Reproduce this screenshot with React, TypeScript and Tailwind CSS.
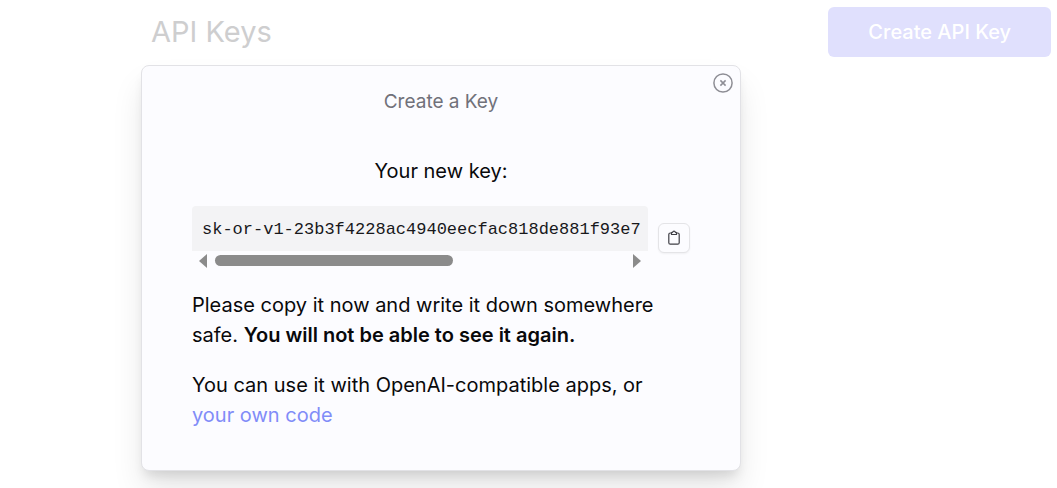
import { useRef } from "react";

const apiKey = "sk-or-v1-23b3f4228ac4940eecfac818de881f93e7";

function CloseIcon() {
  return (
    <svg className="size-5" viewBox="0 0 20 20" fill="none" stroke="#8e8e95" strokeWidth="1.5" aria-hidden="true">
      <circle cx="10" cy="10" r="9.1" />
      <path d="M7.4 7.4l5.2 5.2M12.6 7.4l-5.2 5.2" />
    </svg>
  );
}

function ClipboardIcon() {
  return (
    <svg className="h-4 w-3" viewBox="0 0 12 16" fill="none" stroke="#3f3f46" strokeWidth="1.2" strokeLinejoin="round" aria-hidden="true">
      <path d="M3.5 3H2.3C1.4 3 .8 3.6.8 4.5v8.2c0 .9.6 1.5 1.5 1.5h7.4c.9 0 1.5-.6 1.5-1.5V4.5c0-.9-.6-1.5-1.5-1.5H8.5" />
      <path d="M3.5 4.5V2.9c0-.4.3-.6.7-.6h.4C4.8 1.6 5.3 1.2 6 1.2s1.2.4 1.4 1.1h.4c.4 0 .7.2.7.6v1.6z" />
    </svg>
  );
}

function KeyField() {
  const code = useRef<HTMLPreElement>(null);
  const scroll = (left: number) => code.current?.scrollBy({ left });
  return (
    <div className="min-w-0 flex-1">
      <pre
        ref={code}
        className="overflow-hidden rounded-t bg-[#f3f3f5] pt-2.5 pb-[7px] pl-2.5 font-['Liberation_Mono',monospace] text-[17px] leading-7 text-[#18181b]"
      >
        <code className="font-[inherit]">{apiKey}</code>
      </pre>
      <div className="flex h-[19px] items-center gap-2 px-[7px]">
        <button type="button" aria-label="Scroll left" onClick={() => scroll(-40)}>
          <svg className="h-3.5 w-2" viewBox="0 0 8 14" fill="#8b8b8b"><path d="M8 0v14L0 7z" /></svg>
        </button>
        <div className="flex-1">
          <div className="h-[11px] w-[58%] rounded-full bg-[#8b8b8b]" />
        </div>
        <button type="button" aria-label="Scroll right" onClick={() => scroll(40)}>
          <svg className="h-3.5 w-2" viewBox="0 0 8 14" fill="#8b8b8b"><path d="M0 0v14l8-7z" /></svg>
        </button>
      </div>
    </div>
  );
}

export default function App() {
  return (
    <div className="h-screen overflow-hidden bg-white font-['Inter',sans-serif] text-xl leading-[30px] text-[#09090b]">
      <header className="flex items-start justify-between pt-[7px] pr-1.5 pl-[151px]">
        <h1 className="text-[29px] leading-[50px] text-[#cececf]">API Keys</h1>
        <button type="button" className="h-[50px] rounded-md bg-[#e0e0fd] px-10 font-medium text-white">
          Create API Key
        </button>
      </header>

      <section
        role="dialog"
        aria-labelledby="dialog-title"
        className="relative mt-2 ml-[141px] w-[600px] max-w-full rounded-lg border border-[#e2e2e6] bg-[#fcfcff] px-[50px] pt-5 pb-10 shadow-[0_20px_32px_-2px_rgba(0,0,0,0.1),0_8px_12px_-4px_rgba(0,0,0,0.12)]"
      >
        <button type="button" aria-label="Close" className="absolute top-[7px] right-[7px]">
          <CloseIcon />
        </button>
        <h2 id="dialog-title" className="text-center text-[19px] leading-8 text-[#71717a]">
          Create a Key
        </h2>
        <p className="mt-[38px] text-center">Your new key:</p>
        <div className="mt-5 flex items-center gap-2.5">
          <KeyField />
          <button
            type="button"
            aria-label="Copy key"
            className="flex h-[30px] w-8 items-center justify-center rounded-md border border-[#e4e4e7] bg-[#fcfcff] shadow-xs"
          >
            <ClipboardIcon />
          </button>
        </div>
        <p className="mt-5">
          Please copy it now and write it down somewhere safe.{" "}
          <strong className="font-semibold">You will not be able to see it again.</strong>
        </p>
        <p className="mt-5">
          You can use it with OpenAI-compatible apps, or{" "}
          <a href="#docs" className="text-[#818cf8]">your own code</a>
        </p>
      </section>
    </div>
  );
}
